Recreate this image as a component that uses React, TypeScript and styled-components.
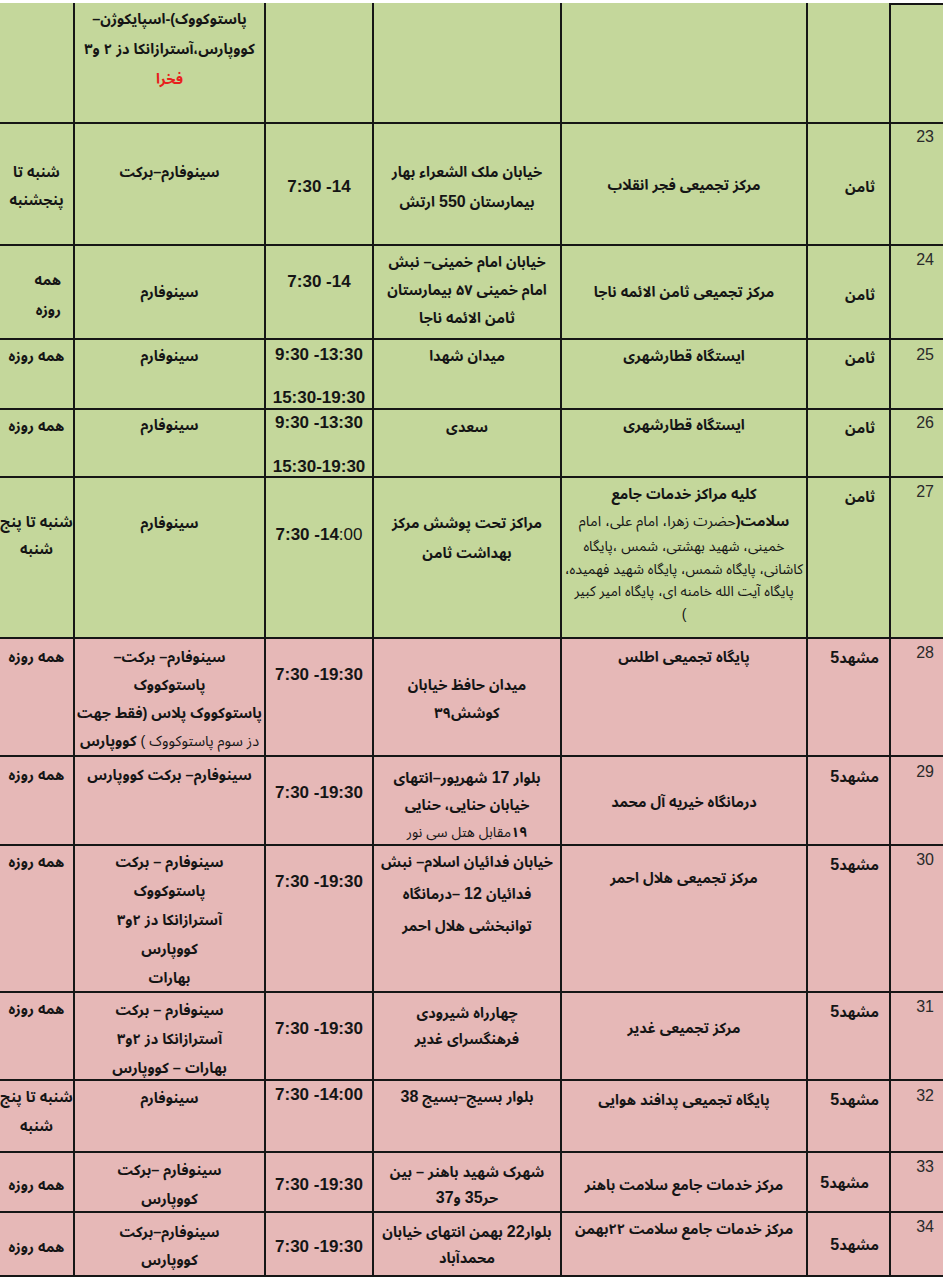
import React from "react";
import styled, { createGlobalStyle } from "styled-components";

const GlobalStyle = createGlobalStyle`
    body {
        margin: 0;
        background: #ffffff;
    }
`;

const GREEN = "#c4d79b";
const PINK = "#e6b8b7";
const LINE = "#161616";

const Sheet = styled.div`
    width: 943px;
    padding-top: 3px;
    direction: rtl;
    font-family: "Liberation Sans", "Noto Sans Arabic", "Noto Naskh Arabic", "DejaVu Sans", sans-serif;
    color: #151515;
`;

const Row = styled.div<{ $h: number; $bg: string }>`
    display: grid;
    grid-template-columns: 54px 83px 246px 188px 108px 191px 73px;
    height: ${(p) => p.$h}px;
    box-sizing: border-box;
    background: ${(p) => p.$bg};
    border-bottom: 2px solid ${LINE};
`;

const NumCell = styled.div<{ $pt: number; $cap?: boolean }>`
    border-left: 2px solid ${LINE};
    border-top: ${(p) => (p.$cap ? `2px solid ${LINE}` : "none")};
    padding: ${(p) => p.$pt}px 9px 0 0;
    font-size: 16px;
    line-height: 20px;
    font-weight: 400;
    text-align: right;
    color: #2a2a2a;
`;

const Cell = styled.div<{
    $pt: number;
    $lh: number;
    $gap: number;
    $align: "center" | "right";
    $pr: number;
    $ltr?: boolean;
    $edge?: boolean;
}>`
    display: flex;
    flex-direction: column;
    gap: ${(p) => p.$gap}px;
    padding: ${(p) => p.$pt}px ${(p) => p.$pr}px 0 0;
    border-left: ${(p) => (p.$edge ? "none" : `2px solid ${LINE}`)};
    text-align: ${(p) => p.$align};
    line-height: ${(p) => p.$lh}px;
    direction: ${(p) => (p.$ltr ? "ltr" : "rtl")};
    font-size: ${(p) => (p.$ltr ? "17px" : "14.5px")};
    font-weight: 700;
    min-width: 0;
`;

const Line = styled.span<{ $small?: boolean; $red?: boolean; $lh?: number }>`
    display: block;
    white-space: nowrap;
    font-size: ${(p) => (p.$small ? "14px" : "inherit")};
    font-weight: ${(p) => (p.$small ? 400 : 700)};
    color: ${(p) => (p.$red ? "#e8201c" : "inherit")};
    line-height: ${(p) => (p.$lh ? `${p.$lh}px` : "inherit")};
`;

const Light = styled.span`
    font-weight: 400;
`;

const Num = styled.span`
    font-size: 16px;
    font-weight: 700;
`;

type SL = { t: React.ReactNode; small?: boolean; red?: boolean; lh?: number };
type L = React.ReactNode | SL;
type C = {
    lines: L[];
    pt: number;
    lh?: number;
    gap?: number;
    al?: "center" | "right";
    pr?: number;
};
type R = {
    h: number;
    bg: string;
    num: string;
    numPt: number;
    city: C;
    center: C;
    addr: C;
    time: C;
    vac: C;
    days: C;
};

const empty: C = { lines: [], pt: 0 };
const mashhad = <>مشهد<Num>5</Num></>;

const rows: R[] = [
    {
        h: 121, bg: GREEN, num: "", numPt: 0,
        city: empty, center: empty, addr: empty, time: empty,
        vac: { lines: ["پاستوکووک)-اسپایکوژن–", "کووپارس،آسترازانکا دز ۲ و۳", { t: "فخرا", red: true }], pt: 1, lh: 30 },
        days: empty,
    },
    {
        h: 122, bg: GREEN, num: "23", numPt: 3,
        city: { lines: ["ثامن"], pt: 49, al: "right", pr: 14 },
        center: { lines: ["مرکز تجمیعی فجر انقلاب"], pt: 47 },
        addr: { lines: ["خیابان ملک الشعراء بهار", <>بیمارستان <Num>550</Num> ارتش</>], pt: 33, lh: 30 },
        time: { lines: ["7:30 -14"], pt: 49 },
        vac: { lines: ["سینوفارم–برکت"], pt: 34 },
        days: { lines: ["شنبه تا", "پنجشنبه"], pt: 34 },
    },
    {
        h: 94, bg: GREEN, num: "24", numPt: 4,
        city: { lines: ["ثامن"], pt: 35, al: "right", pr: 14 },
        center: { lines: ["مرکز تجمیعی ثامن  الائمه ناجا"], pt: 32 },
        addr: { lines: ["خیابان امام خمینی– نبش", "امام خمینی ۵۷ بیمارستان", "ثامن الائمه ناجا"], pt: 2 },
        time: { lines: ["7:30 -14"], pt: 22 },
        vac: { lines: ["سینوفارم"], pt: 32 },
        days: { lines: ["همه", "روزه"], pt: 19, lh: 30, al: "right", pr: 12 },
    },
    {
        h: 70, bg: GREEN, num: "25", numPt: 5,
        city: { lines: ["ثامن"], pt: 4, al: "right", pr: 14 },
        center: { lines: ["ایستگاه قطارشهری"], pt: 2 },
        addr: { lines: ["میدان شهدا"], pt: 2 },
        time: { lines: ["9:30 -13:30", "15:30-19:30"], pt: 3, lh: 24, gap: 19 },
        vac: { lines: ["سینوفارم"], pt: 2 },
        days: { lines: ["همه روزه"], pt: 2 },
    },
    {
        h: 68, bg: GREEN, num: "26", numPt: 3,
        city: { lines: ["ثامن"], pt: 4, al: "right", pr: 14 },
        center: { lines: ["ایستگاه قطارشهری"], pt: 1 },
        addr: { lines: ["سعدی"], pt: 3 },
        time: { lines: ["9:30 -13:30", "15:30-19:30"], pt: 1, lh: 24, gap: 20 },
        vac: { lines: ["سینوفارم"], pt: 1 },
        days: { lines: ["همه روزه"], pt: 2 },
    },
    {
        h: 161, bg: GREEN, num: "27", numPt: 4,
        city: { lines: ["ثامن"], pt: 5, al: "right", pr: 14 },
        center: {
            lines: [
                { t: "کلیه مراکز خدمات جامع", lh: 28 },
                { t: <>سلامت(<Light>حضرت زهرا، امام علی، امام</Light></>, lh: 27 },
                { t: "خمینی، شهید بهشتی، شمس ،پایگاه", small: true },
                { t: "کاشانی، پایگاه شمس، پایگاه شهید فهمیده،", small: true },
                { t: "پایگاه آیت الله خامنه ای، پایگاه امیر کبیر", small: true },
                { t: ")", small: true },
            ],
            pt: 2, lh: 22.5,
        },
        addr: { lines: ["مراکز تحت پوشش مرکز", "بهداشت ثامن"], pt: 30, lh: 30 },
        time: { lines: [<>7:30 -14<Light>:00</Light></>], pt: 43 },
        vac: { lines: ["سینوفارم"], pt: 31 },
        days: { lines: ["شنبه تا پنج", "شنبه"], pt: 31, lh: 27 },
    },
    {
        h: 118, bg: PINK, num: "28", numPt: 4,
        city: { lines: [mashhad], pt: 5, al: "right", pr: 10 },
        center: { lines: ["پایگاه تجمیعی اطلس"], pt: 4 },
        addr: { lines: ["میدان حافظ خیابان", "کوشش۳۹"], pt: 32 },
        time: { lines: ["7:30 -19:30"], pt: 22 },
        vac: {
            lines: [
                "سینوفارم– برکت–",
                "پاستوکووک",
                "پاستوکووک پلاس (فقط جهت",
                <><Light>دز سوم پاستوکووک )</Light> کووپارس</>,
            ],
            pt: 4,
        },
        days: { lines: ["همه روزه"], pt: 4 },
    },
    {
        h: 89, bg: PINK, num: "29", numPt: 5,
        city: { lines: [mashhad], pt: 6, al: "right", pr: 10 },
        center: { lines: ["درمانگاه خیریه آل محمد"], pt: 31 },
        addr: {
            lines: [
                <>بلوار <Num>17</Num> شهریور–انتهای</>,
                "خیابان حنایی، حنایی",
                { t: <><b>۱۹</b>مقابل هتل سی نور</>, small: true },
            ],
            pt: 7, lh: 27,
        },
        time: { lines: ["7:30 -19:30"], pt: 22 },
        vac: { lines: ["سینوفارم– برکت کووپارس"], pt: 4 },
        days: { lines: ["همه روزه"], pt: 4 },
    },
    {
        h: 147, bg: PINK, num: "30", numPt: 4,
        city: { lines: [mashhad], pt: 5, al: "right", pr: 10 },
        center: { lines: ["مرکز تجمیعی هلال احمر"], pt: 18 },
        addr: { lines: ["خیابان فدائیان اسلام– نبش", <>فدائیان <Num>12</Num> –درمانگاه</>, "توانبخشی هلال احمر"], pt: 0, lh: 32 },
        time: { lines: ["7:30 -19:30"], pt: 22 },
        vac: { lines: ["سینوفارم –  برکت", "پاستوکووک", "آسترازانکا دز ۲و۳", "کووپارس", "بهارات"], pt: 2, lh: 29 },
        days: { lines: ["همه روزه"], pt: 2 },
    },
    {
        h: 88, bg: PINK, num: "31", numPt: 4,
        city: { lines: [mashhad], pt: 5, al: "right", pr: 10 },
        center: { lines: ["مرکز تجمیعی غدیر"], pt: 21 },
        addr: { lines: ["چهارراه شیرودی", "فرهنگسرای غدیر"], pt: 7, lh: 26 },
        time: { lines: ["7:30 -19:30"], pt: 22 },
        vac: { lines: ["سینوفارم – برکت", "آسترازانکا دز ۲و۳", "بهارات – کووپارس"], pt: 3, lh: 29 },
        days: { lines: ["همه روزه"], pt: 2 },
    },
    {
        h: 72, bg: PINK, num: "32", numPt: 5,
        city: { lines: [mashhad], pt: 5, al: "right", pr: 10 },
        center: { lines: ["پایگاه تجمیعی پدافند هوایی"], pt: 5 },
        addr: { lines: [<>بلوار بسیج–بسیج <Num>38</Num></>], pt: 2 },
        time: { lines: ["7:30 -14:00"], pt: 0 },
        vac: { lines: ["سینوفارم"], pt: 3 },
        days: { lines: ["شنبه تا پنج", "شنبه"], pt: 2, lh: 29 },
    },
    {
        h: 60, bg: PINK, num: "33", numPt: 4,
        city: { lines: [mashhad], pt: 16, al: "right", pr: 20 },
        center: { lines: ["مرکز خدمات جامع  سلامت  باهنر"], pt: 18 },
        addr: { lines: ["شهرک شهید باهنر – بین", <>حر<Num>35</Num> و<Num>37</Num></>], pt: 6, lh: 26 },
        time: { lines: ["7:30 -19:30"], pt: 18 },
        vac: { lines: ["سینوفارم –برکت", "کووپارس"], pt: 3, lh: 29 },
        days: { lines: ["همه روزه"], pt: 18 },
    },
    {
        h: 64, bg: PINK, num: "34", numPt: 4,
        city: { lines: [mashhad], pt: 18, al: "right", pr: 10 },
        center: { lines: ["مرکز خدمات جامع سلامت ۲۲بهمن"], pt: 2 },
        addr: { lines: [<>بلوار<Num>22</Num> بهمن انتهای خیابان</>, "محمدآباد"], pt: 6, lh: 26 },
        time: { lines: ["7:30 -19:30"], pt: 20 },
        vac: { lines: ["سینوفارم–برکت", "کووپارس"], pt: 5, lh: 28 },
        days: { lines: ["همه روزه"], pt: 20 },
    },
];

const isStyled = (l: L): l is SL =>
    typeof l === "object" && l !== null && !React.isValidElement(l) && "t" in (l as object);

const Column: React.FC<{ c: C; ltr?: boolean; edge?: boolean }> = ({ c, ltr, edge }) => (
    <Cell
        $pt={c.pt}
        $lh={c.lh ?? 28}
        $gap={c.gap ?? 0}
        $align={c.al ?? "center"}
        $pr={c.pr ?? 0}
        $ltr={ltr}
        $edge={edge}
    >
        {c.lines.map((l, i) =>
            isStyled(l) ? (
                <Line key={i} $small={l.small} $red={l.red} $lh={l.lh}>
                    {l.t}
                </Line>
            ) : (
                <Line key={i}>{l as React.ReactNode}</Line>
            )
        )}
    </Cell>
);

const App: React.FC = () => {
    return (
        <>
            <GlobalStyle />
            <Sheet>
                {rows.map((r, i) => (
                    <Row key={i} $h={r.h} $bg={r.bg}>
                        <NumCell $pt={r.numPt} $cap={i === 0}>{r.num}</NumCell>
                        <Column c={r.city} />
                        <Column c={r.center} />
                        <Column c={r.addr} />
                        <Column c={r.time} ltr />
                        <Column c={r.vac} />
                        <Column c={r.days} edge />
                    </Row>
                ))}
            </Sheet>
        </>
    );
};

export default App;
